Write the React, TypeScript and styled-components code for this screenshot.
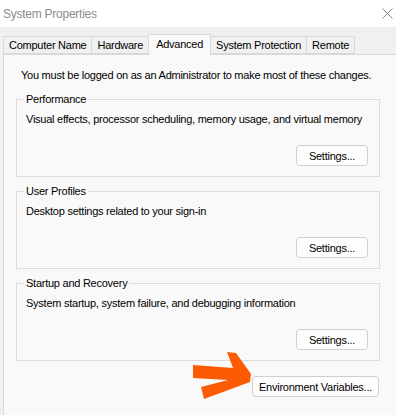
import React from "react";
import styled, { createGlobalStyle } from "styled-components";

const Global = createGlobalStyle`
  html, body { margin: 0; padding: 0; background: #f0f0f0; }
  body { width: 396px; height: 415px; overflow: hidden; }
  * { box-sizing: border-box; }
`;

const FONT = `"Liberation Sans", Arial, sans-serif`;

const Window = styled.div`
  width: 396px;
  height: 415px;
  display: flex;
  flex-direction: column;
  overflow: hidden;
  background: #f0f0f0;
  font-family: ${FONT};
  font-size: 11px;
  letter-spacing: -0.25px;
  color: #000;
`;

const TitleBar = styled.div`
  height: 27px;
  flex-shrink: 0;
  background: #ffffff;
  display: flex;
  align-items: center;
  justify-content: space-between;
  padding: 0 3px 0 3px;
`;

const Title = styled.span`
  font-size: 12px;
  letter-spacing: -0.25px;
  color: #8c8c8c;
  padding-top: 1px;
`;

const CloseIcon = styled.svg`
  width: 11px;
  height: 11px;
`;

const Body = styled.div`
  flex: 1;
  display: flex;
  flex-direction: column;
  padding: 7px 0 0 3px;
`;

const TabStrip = styled.div`
  display: flex;
  align-items: flex-end;
  height: 20px;
  position: relative;
  z-index: 1;
`;

const Tab = styled.div<{ $active?: boolean }>`
  display: flex;
  align-items: center;
  height: ${(p) => (p.$active ? "21px" : "18px")};
  margin-bottom: ${(p) => (p.$active ? "-1px" : "0")};
  padding: ${(p) => (p.$active ? "0 7px 2px 7px" : "0 5px 0 5px")};
  border: 1px solid #d9d9d9;
  border-bottom: ${(p) => (p.$active ? "none" : "1px solid #d9d9d9")};
  margin-left: -1px;
  background: ${(p) => (p.$active ? "#f9f9f9" : "#f0f0f0")};
  white-space: nowrap;
  &:first-child { margin-left: 0; }
  ${(p) => (p.$active ? "position: relative; z-index: 2;" : "")}
`;

const Panel = styled.div`
  flex: 1;
  margin-right: -10px;
  background: #f9f9f9;
  border-left: 1px solid #d9d9d9;
  border-top: 1px solid #d9d9d9;
  padding: 12px 0 0 12px;
  display: flex;
  flex-direction: column;
`;

const Notice = styled.div`
  line-height: 16px;
  padding-left: 5px;
  white-space: nowrap;
  margin-bottom: 8px;
`;

const Group = styled.fieldset`
  width: 364px;
  min-width: 0;
  margin: 0 0 6px 0;
  padding: 0 11px 10px 8px;
  border: 1px solid #dcdcdc;
  display: flex;
  flex-direction: column;
`;

const Legend = styled.legend`
  padding: 0 2px;
  margin-left: -1px;
  line-height: 16px;
`;

const Description = styled.div`
  line-height: 16px;
  margin-top: 4px;
  padding-left: 1px;
  white-space: nowrap;
`;

const ButtonRow = styled.div`
  display: flex;
  justify-content: flex-end;
  margin-top: 18px;
`;

const Button = styled.button<{ $width: number }>`
  width: ${(p) => p.$width}px;
  height: 21px;
  padding: 0;
  background: #fdfdfd;
  border: 1px solid #cfcfcf;
  border-radius: 4px;
  font-family: ${FONT};
  font-size: 11px;
  letter-spacing: -0.25px;
  color: #000;
  display: flex;
  align-items: center;
  justify-content: center;
`;

const Footer = styled.div`
  position: relative;
  width: 364px;
  margin-top: 9px;
  display: flex;
  justify-content: flex-end;
  padding-right: 1px;
`;

const Arrow = styled.svg`
  position: absolute;
  left: 174px;
  top: -26px;
  width: 62px;
  height: 52px;
`;

const tabs = ["Computer Name", "Hardware", "Advanced", "System Protection", "Remote"];

const groups = [
  { title: "Performance", text: "Visual effects, processor scheduling, memory usage, and virtual memory" },
  { title: "User Profiles", text: "Desktop settings related to your sign-in" },
  { title: "Startup and Recovery", text: "System startup, system failure, and debugging information" },
];

export default function App() {
  return (
    <Window>
      <Global />
      <TitleBar>
        <Title>System Properties</Title>
        <CloseIcon viewBox="0 0 11 11">
          <path d="M0.5 0.5 L10.5 10.5 M10.5 0.5 L0.5 10.5" stroke="#8a8a8a" strokeWidth="1" fill="none" />
        </CloseIcon>
      </TitleBar>
      <Body>
        <TabStrip>
          {tabs.map((t) => (
            <Tab key={t} $active={t === "Advanced"}>
              {t}
            </Tab>
          ))}
        </TabStrip>
        <Panel>
          <Notice>You must be logged on as an Administrator to make most of these changes.</Notice>
          {groups.map((g) => (
            <Group key={g.title}>
              <Legend>{g.title}</Legend>
              <Description>{g.text}</Description>
              <ButtonRow>
                <Button $width={72}>Settings...</Button>
              </ButtonRow>
            </Group>
          ))}
          <Footer>
            <Arrow viewBox="0 0 62 52">
              <polygon
                points="3,15 43,18 37,2 46,3 61,24 60,32 14,49 11,37 38,30 3,28"
                fill="#fd5a04"
              />
            </Arrow>
            <Button $width={127}>Environment Variables...</Button>
          </Footer>
        </Panel>
      </Body>
    </Window>
  );
}
